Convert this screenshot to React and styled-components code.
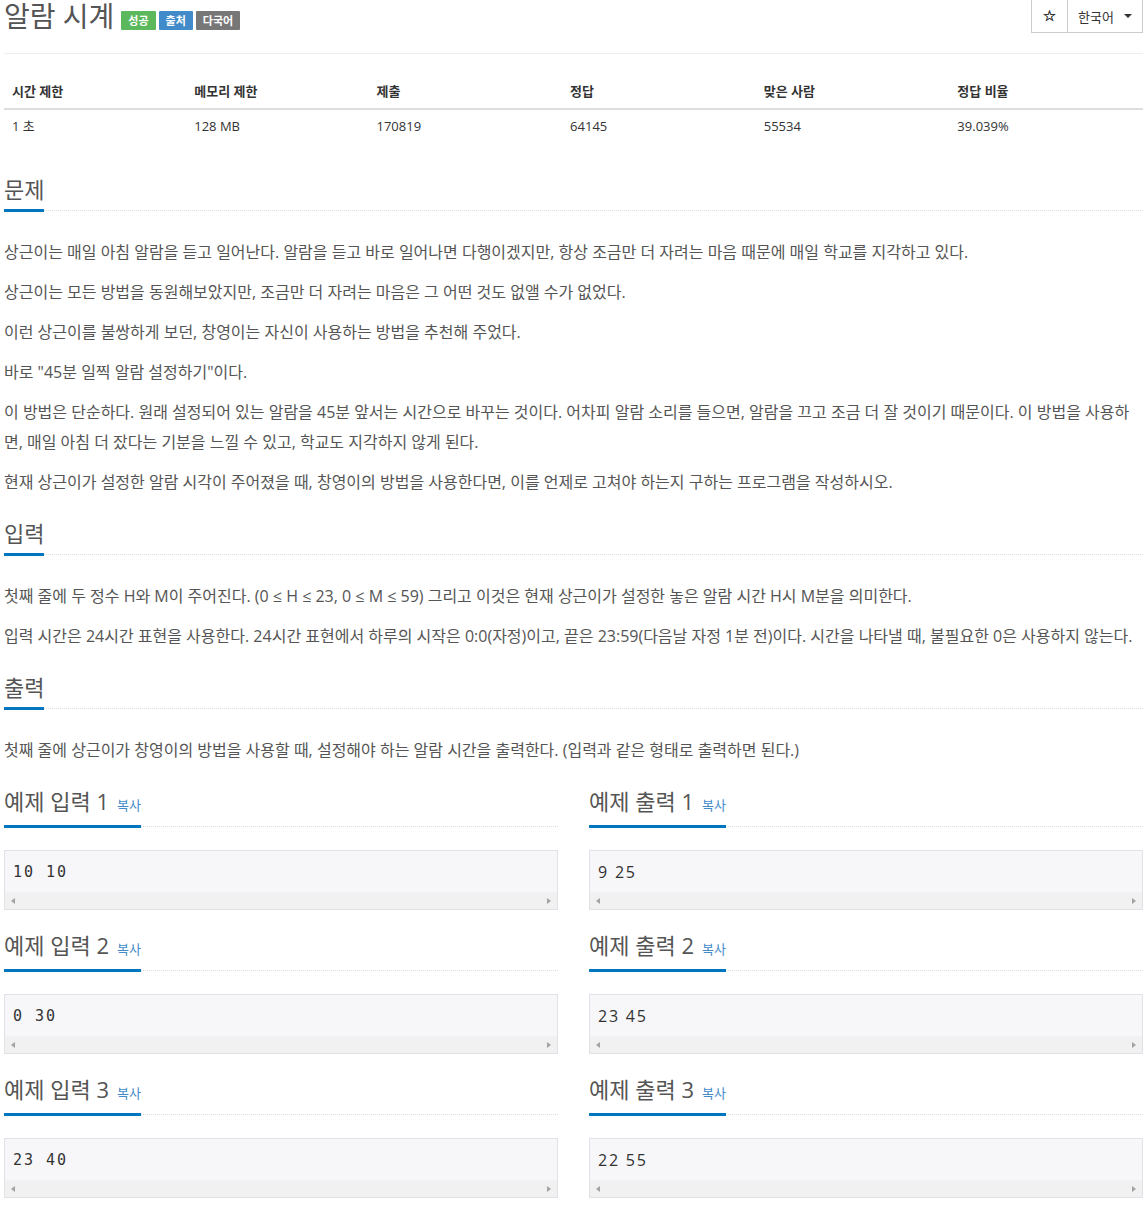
import React from "react";
import styled, { createGlobalStyle } from "styled-components";

const Global = createGlobalStyle`
  html { overflow: hidden; }
  body {
    margin: 0;
    background: #fff;
    color: #555;
    font-family: "Open Sans", "Noto Sans CJK KR", sans-serif;
    font-size: 14px;
  }
`;

const Page = styled.div`
  padding: 0 4px;
`;

const Header = styled.div`
  display: flex;
  justify-content: space-between;
  align-items: flex-start;
  padding-bottom: 19px;
  border-bottom: 1px solid #eee;
`;

const TitleRow = styled.div`
  display: flex;
  align-items: flex-start;
  gap: 3px;
`;

const Title = styled.h1`
  margin: -2px 4px 0 0;
  font-size: 28px;
  font-weight: 400;
  line-height: 36px;
  color: #555;
`;

const Label = styled.span`
  display: inline-block;
  height: 19px;
  line-height: 19px;
  padding: 0 7px;
  margin-top: 11px;
  font-size: 11px;
  font-weight: 700;
  color: #fff;
  background: ${(p) => p.$bg};
  border-radius: 1px;
`;

const BtnGroup = styled.div`
  display: flex;
  margin-top: -1px;
`;

const Btn = styled.button`
  height: 34px;
  padding: 0 ${(p) => (p.$wide ? "10px" : "11px")};
  border: 1px solid #ccc;
  margin-left: -1px;
  background: #fff;
  color: #333;
  font-family: "Open Sans", "Noto Sans CJK KR", sans-serif;
  font-size: 13px;
  display: flex;
  align-items: center;
  gap: 10px;
`;

const Star = styled.span`
  font-family: "DejaVu Sans", sans-serif;
  font-size: 15px;
  color: #333;
  -webkit-text-stroke: 0.4px #333;
`;

const Caret = styled.span`
  width: 0;
  height: 0;
  border-left: 4px solid transparent;
  border-right: 4px solid transparent;
  border-top: 4px solid #333;
`;

const StatTable = styled.table`
  width: 100%;
  border-collapse: collapse;
  margin-top: 20px;
  font-size: 13px;
  color: #333;
`;

const Th = styled.th`
  text-align: left;
  font-weight: 700;
  padding: 8px;
  line-height: 18px;
  border-bottom: 2px solid #ddd;
  width: ${(p) => p.$w};
`;

const Td = styled.td`
  padding: 7px 8px 8px;
  line-height: 18px;
  border-top: 1px solid #ddd;
`;

const Section = styled.section`
  margin-top: ${(p) => p.$top || "21px"};
`;

const Headline = styled.div`
  border-bottom: 1px dotted #ddd;
  margin-bottom: ${(p) => p.$mb || "26px"};
`;

const H2 = styled.h2`
  display: inline-block;
  margin: 0 0 -2px;
  padding-bottom: 5px;
  border-bottom: 3px solid #0076c0;
  font-size: 22px;
  font-weight: 400;
  line-height: 30px;
  color: #555;
`;

const CopyLink = styled.a`
  font-size: 13px;
  color: #428bca;
  margin-left: 8px;
  text-decoration: none;
`;

const P = styled.p`
  margin: 0 0 10px;
  font-size: 16px;
  line-height: 30px;
  color: #555;
`;

const SampleGrid = styled.div`
  display: grid;
  grid-template-columns: 1fr 1fr;
  column-gap: 31px;
  row-gap: 20px;
  margin-top: 21px;
`;

const Pre = styled.div`
  border: 1px solid #e1e1e8;
  background: #f7f7f9;
`;

const Code = styled.div`
  padding: 10px 8px 8px;
  height: 23px;
  line-height: 23px;
  color: #333;
  font-family: ${(p) =>
    p.$mono ? `"DejaVu Sans Mono", monospace` : `"Open Sans", sans-serif`};
  font-size: ${(p) => (p.$mono ? "15px" : "16px")};
  letter-spacing: ${(p) => (p.$mono ? "2px" : "1.8px")};
`;

const ScrollBar = styled.div`
  height: 17px;
  background: #f1f1f1;
  display: flex;
  justify-content: space-between;
  align-items: center;
  padding: 0 6px;
`;

const Arrow = styled.span`
  width: 0;
  height: 0;
  border-top: 3.5px solid transparent;
  border-bottom: 3.5px solid transparent;
  ${(p) =>
    p.$dir === "left"
      ? "border-right: 4px solid #a3a3a3;"
      : "border-left: 4px solid #a3a3a3;"}
`;

const samples = [
  ["입력", 1, "10 10", true],
  ["출력", 1, "9 25", false],
  ["입력", 2, "0 30", true],
  ["출력", 2, "23 45", false],
  ["입력", 3, "23 40", true],
  ["출력", 3, "22 55", false],
];

function Sample({ kind, n, data, mono }) {
  return (
    <div>
      <Headline $mb="23px">
        <H2>
          예제 {kind} {n}
          <CopyLink href="#">복사</CopyLink>
        </H2>
      </Headline>
      <Pre>
        <Code $mono={mono}>{data}</Code>
        <ScrollBar>
          <Arrow $dir="left" />
          <Arrow $dir="right" />
        </ScrollBar>
      </Pre>
    </div>
  );
}

export default function App() {
  return (
    <Page>
      <Global />
      <Header>
        <TitleRow>
          <Title>알람 시계</Title>
          <Label $bg="#5cb85c">성공</Label>
          <Label $bg="#428bca">출처</Label>
          <Label $bg="#777">다국어</Label>
        </TitleRow>
        <BtnGroup>
          <Btn>
            <Star>☆</Star>
          </Btn>
          <Btn $wide>
            한국어 <Caret />
          </Btn>
        </BtnGroup>
      </Header>

      <StatTable>
        <thead>
          <tr>
            <Th $w="16%">시간 제한</Th>
            <Th $w="16%">메모리 제한</Th>
            <Th $w="17%">제출</Th>
            <Th $w="17%">정답</Th>
            <Th $w="17%">맞은 사람</Th>
            <Th $w="17%">정답 비율</Th>
          </tr>
        </thead>
        <tbody>
          <tr>
            <Td>1 초</Td>
            <Td>128 MB</Td>
            <Td>170819</Td>
            <Td>64145</Td>
            <Td>55534</Td>
            <Td>39.039%</Td>
          </tr>
        </tbody>
      </StatTable>

      <Section $top="31px">
        <Headline>
          <H2>문제</H2>
        </Headline>
        <P>
          상근이는 매일 아침 알람을 듣고 일어난다. 알람을 듣고 바로 일어나면
          다행이겠지만, 항상 조금만 더 자려는 마음 때문에 매일 학교를 지각하고
          있다.
        </P>
        <P>
          상근이는 모든 방법을 동원해보았지만, 조금만 더 자려는 마음은 그 어떤
          것도 없앨 수가 없었다.
        </P>
        <P>
          이런 상근이를 불쌍하게 보던, 창영이는 자신이 사용하는 방법을 추천해
          주었다.
        </P>
        <P>바로 "45분 일찍 알람 설정하기"이다.</P>
        <P>
          이 방법은 단순하다. 원래 설정되어 있는 알람을 45분 앞서는 시간으로
          바꾸는 것이다. 어차피 알람 소리를 들으면, 알람을 끄고 조금 더 잘
          것이기 때문이다. 이 방법을 사용하면, 매일 아침 더 잤다는 기분을 느낄 수
          있고, 학교도 지각하지 않게 된다.
        </P>
        <P>
          현재 상근이가 설정한 알람 시각이 주어졌을 때, 창영이의 방법을
          사용한다면, 이를 언제로 고쳐야 하는지 구하는 프로그램을 작성하시오.
        </P>
      </Section>

      <Section>
        <Headline>
          <H2>입력</H2>
        </Headline>
        <P>
          첫째 줄에 두 정수 H와 M이 주어진다. (0 ≤ H ≤ 23, 0 ≤ M ≤ 59) 그리고
          이것은 현재 상근이가 설정한 놓은 알람 시간 H시 M분을 의미한다.
        </P>
        <P>
          입력 시간은 24시간 표현을 사용한다. 24시간 표현에서 하루의 시작은
          0:0(자정)이고, 끝은 23:59(다음날 자정 1분 전)이다. 시간을 나타낼 때,
          불필요한 0은 사용하지 않는다.
        </P>
      </Section>

      <Section>
        <Headline>
          <H2>출력</H2>
        </Headline>
        <P>
          첫째 줄에 상근이가 창영이의 방법을 사용할 때, 설정해야 하는 알람 시간을
          출력한다. (입력과 같은 형태로 출력하면 된다.)
        </P>
      </Section>

      <SampleGrid>
        {samples.map(([k, n, d, m]) => (
          <Sample key={k + n} kind={k} n={n} data={d} mono={m} />
        ))}
      </SampleGrid>
    </Page>
  );
}
